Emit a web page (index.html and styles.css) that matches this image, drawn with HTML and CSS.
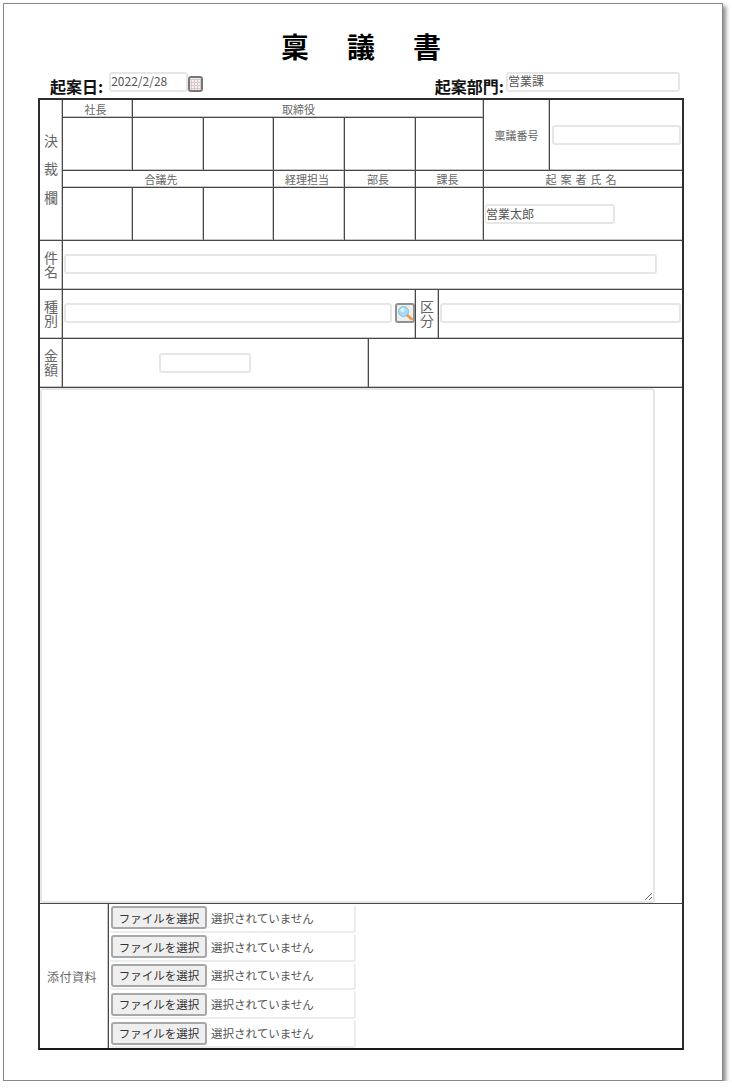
FILE: index.html
```html
<!DOCTYPE html>
<html lang="ja">
<head>
    <meta charset="UTF-8">
    <meta name="viewport" content="width=device-width, initial-scale=1.0">
    <title>稟議書</title>
    <link rel="stylesheet" href="styles.css">
</head>
<body>
    <div class="page">
        <h1 class="title">稟議書</h1>
        <div class="head-row">
            <div class="head-group">
                <label class="head-label label-date">起案日:</label>
                <input class="field field-date" type="text" value="2022/2/28">
                <button class="calendar-btn" type="button">
                    <svg width="11" height="11" viewBox="0 0 11 11">
                        <rect x="0" y="0" width="11" height="11" fill="#f6f0f0"/>
                        <path d="M0 .5h11M0 3.5h11M0 6.5h11M0 9.5h11" stroke="#e2c4c4" stroke-width="1"/>
                        <path d="M1.5 0v11M4.5 0v11M7.5 0v11M10.5 0v11" stroke="#d6c8cc" stroke-width="1"/>
                    </svg>
                </button>
            </div>
            <div class="head-group">
                <label class="head-label">起案部門:</label>
                <input class="field field-dept" type="text" value="営業課">
            </div>
        </div>

        <div class="sheet">
            <div class="approval">
                <div class="cell stamp-title span-rows-4">決<br>裁<br>欄</div>
                <div class="cell cap">社長</div>
                <div class="cell cap span-5 cap-board">取締役</div>
                <div class="cell cap cap-plain span-rows-2">稟議番号</div>
                <div class="cell cell-last center span-rows-2"><input class="field field-no" type="text"></div>

                <div class="cell"></div>
                <div class="cell"></div>
                <div class="cell"></div>
                <div class="cell"></div>
                <div class="cell"></div>
                <div class="cell"></div>

                <div class="cell cap span-3 cap-council">合議先</div>
                <div class="cell cap">経理担当</div>
                <div class="cell cap">部長</div>
                <div class="cell cap">課長</div>
                <div class="cell cap cap-plain cell-last span-2 wide-cap">起案者氏名</div>

                <div class="cell"></div>
                <div class="cell"></div>
                <div class="cell"></div>
                <div class="cell"></div>
                <div class="cell"></div>
                <div class="cell"></div>
                <div class="cell cell-last span-2 center"><input class="field field-name" type="text" value="営業太郎"></div>
            </div>

            <div class="row">
                <div class="side-label">件<br>名</div>
                <div class="row-body pad-subject"><input class="field field-subject" type="text"></div>
            </div>

            <div class="row">
                <div class="side-label">種<br>別</div>
                <div class="row-body body-type">
                    <input class="field field-type" type="text">
                    <button class="search-btn" type="button">
                        <svg width="16" height="16" viewBox="0 0 16 16">
                            <path d="M9.5 9.5l5 4.5" stroke="#f09a4a" stroke-width="3" stroke-linecap="round"/>
                            <circle cx="6.5" cy="6.5" r="5" fill="#a9dcf3" stroke="#7fc2e4" stroke-width="1"/>
                            <circle cx="5.5" cy="5" r="2" fill="#dff3fb"/>
                        </svg>
                    </button>
                </div>
                <div class="side-label">区<br>分</div>
                <div class="row-body body-kind"><input class="field field-kind" type="text"></div>
            </div>

            <div class="row">
                <div class="side-label">金<br>額</div>
                <div class="row-body body-amount"><input class="field field-amount" type="text"></div>
                <div class="row-body"></div>
            </div>

            <div class="row row-memo">
                <textarea class="memo"></textarea>
            </div>

            <div class="attach">
                <div class="attach-label">添付資料</div>
                <div class="file-list">
                    <div class="file-row"><button class="file-btn" type="button">ファイルを選択</button><span class="file-text">選択されていません</span></div>
                    <div class="file-row"><button class="file-btn" type="button">ファイルを選択</button><span class="file-text">選択されていません</span></div>
                    <div class="file-row"><button class="file-btn" type="button">ファイルを選択</button><span class="file-text">選択されていません</span></div>
                    <div class="file-row"><button class="file-btn" type="button">ファイルを選択</button><span class="file-text">選択されていません</span></div>
                    <div class="file-row"><button class="file-btn" type="button">ファイルを選択</button><span class="file-text">選択されていません</span></div>
                </div>
            </div>
        </div>
    </div>
</body>
</html>
```

FILE: styles.css
```css
* {
    box-sizing: border-box;
}
body {
    margin: 0;
    background: #ffffff;
    font-family: "Noto Sans CJK JP", "Noto Sans", sans-serif;
    color: #666666;
}
.page {
    width: 720px;
    height: 1078px;
    margin: 3px 0 0 3px;
    padding: 0 0 0 34px;
    border: 1px solid #888888;
    background: #ffffff;
    box-shadow: 3px 3px 4px #8f8f8f;
}
.title {
    width: 646px;
    height: 68px;
    margin: 0;
    padding: 25px 0 0 38px;
    font-size: 28px;
    line-height: 34px;
    font-weight: bold;
    color: #000000;
    text-align: center;
    letter-spacing: 38px;
}
.head-row {
    display: flex;
    justify-content: space-between;
    width: 646px;
    height: 26px;
    padding: 0 4px 0 12px;
}
.head-group {
    display: flex;
    align-items: flex-start;
}
.head-label {
    margin: 3px 2px 0 0;
    font-size: 16px;
    line-height: 22px;
    font-weight: bold;
    color: #111111;
}
.label-date {
    margin-right: 6px;
}
.field {
    height: 20px;
    padding: 0 1px 3px 0;
    border: 2px solid #e6e6e6;
    border-radius: 3px;
    background: #ffffff;
    font-family: inherit;
    font-size: 12px;
    color: #555555;
    outline: none;
}
.field-date { width: 79px; }
.field-dept { width: 174px; }
.field-no { width: 129px; margin-left: 2px; }
.field-name { width: 130px; margin-left: 1px; padding-bottom: 1px; border-left-width: 1px; }
.field-subject { width: 593px; }
.field-type { width: 328px; }
.field-kind { width: 241px; }
.field-amount { width: 92px; }
.calendar-btn {
    display: flex;
    align-items: center;
    justify-content: center;
    width: 15px;
    height: 16px;
    margin-top: 4px;
    padding: 0;
    border: 2px solid #777777;
    border-radius: 3px;
    background: #eeeeee;
}
.sheet {
    width: 646px;
    height: 952px;
    border: 2px solid #2e2e2e;
    border-bottom-color: #1a1a1a;
}
.approval {
    display: grid;
    grid-template-columns: 23px 70px 71px 70px 71px 71px 68px 66px 132px;
    grid-template-rows: 18px 53px 17px 53px;
}
.cell {
    display: flex;
    border-right: 1px solid #484848;
    border-bottom: 1px solid #484848;
    box-shadow: inset -1px -1px 0 rgba(0, 0, 0, 0.22);
    font-size: 11px;
}
.cell-last {
    border-right: none;
    box-shadow: inset 0 -1px 0 rgba(0, 0, 0, 0.22);
}
.cap {
    align-items: center;
    justify-content: center;
    padding-right: 4px;
    line-height: 14px;
}
.cap-plain {
    padding-right: 0;
}
.cap-board {
    padding-right: 19px;
}
.cap-council {
    padding-right: 14px;
}
.center {
    align-items: center;
}
.wide-cap {
    letter-spacing: 4px;
}
.stamp-title {
    align-items: center;
    justify-content: center;
    padding: 0 0 3px;
    font-size: 14px;
    line-height: 28.5px;
    text-align: center;
}
.span-2 { grid-column: span 2; }
.span-3 { grid-column: span 3; }
.span-5 { grid-column: span 5; }
.span-rows-2 { grid-row: span 2; }
.span-rows-4 { grid-row: span 4; }
.row {
    display: flex;
    height: 49px;
    border-bottom: 1px solid #484848;
    box-shadow: inset 0 -1px 0 rgba(0, 0, 0, 0.22);
}
.side-label {
    display: flex;
    flex: 0 0 23px;
    align-items: center;
    justify-content: center;
    padding-bottom: 2px;
    border-right: 1px solid #484848;
    box-shadow: inset -1px 0 0 rgba(0, 0, 0, 0.22);
    font-size: 14px;
    line-height: 14px;
    text-align: center;
}
.row-body {
    display: flex;
    flex: 1;
    align-items: center;
    padding-bottom: 2px;
}
.pad-subject {
    padding-left: 1px;
}
.body-type {
    flex: 0 0 353px;
    padding-left: 1px;
    border-right: 1px solid #484848;
    box-shadow: inset -1px 0 0 rgba(0, 0, 0, 0.22);
}
.body-kind {
    padding-left: 1px;
}
.body-amount {
    flex: 0 0 306px;
    padding: 0 0 0 96px;
    border-right: 1px solid #484848;
    box-shadow: inset -1px 0 0 rgba(0, 0, 0, 0.22);
}
.search-btn {
    display: flex;
    align-items: center;
    justify-content: center;
    width: 20px;
    height: 20px;
    margin-left: 3px;
    padding: 0;
    border: 2px solid #909090;
    border-radius: 3px;
    background: #eeeeee;
}
.row-memo {
    height: 516px;
    box-shadow: none;
}
.memo {
    display: block;
    width: 615px;
    height: 515px;
    border: 2px solid #e6e6e6;
    border-radius: 3px;
    background: #ffffff;
    outline: none;
}
.attach {
    display: flex;
    height: 144px;
}
.attach-label {
    display: flex;
    flex: 0 0 69px;
    align-items: center;
    justify-content: center;
    padding-right: 4px;
    border-right: 1px solid #484848;
    box-shadow: inset -1px 0 0 rgba(0, 0, 0, 0.22);
    font-size: 12px;
    letter-spacing: 0.5px;
}
.file-list {
    display: flex;
    flex-direction: column;
    gap: 1px;
    padding: 1px 0 0 1px;
}
.file-row {
    display: flex;
    align-items: center;
    width: 246px;
    height: 28px;
    padding: 0 0 0 1px;
    border-right: 2px solid #ececec;
    border-bottom: 2px solid #ececec;
    border-radius: 3px;
}
.file-btn {
    width: 96px;
    height: 23px;
    padding: 0;
    border: 2px solid #a8a8a8;
    border-radius: 3px;
    background: #efefef;
    font-family: inherit;
    font-size: 11.5px;
    color: #333333;
}
.file-text {
    margin-left: 4px;
    font-size: 11.5px;
    color: #555555;
}
```
